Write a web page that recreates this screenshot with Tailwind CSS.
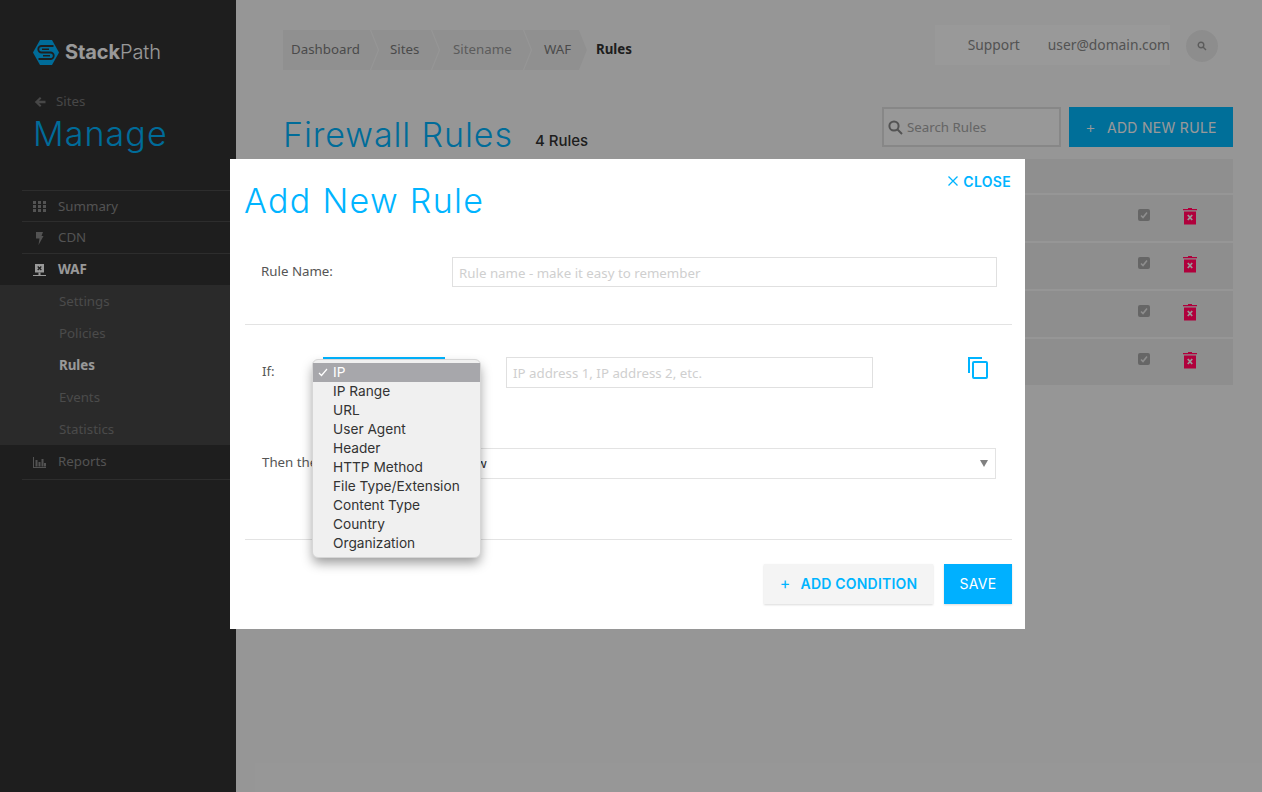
<!DOCTYPE html>
<html lang="en">
<head>
  <meta charset="UTF-8">
  <title>Firewall Rules</title>
  <script src="https://cdn.jsdelivr.net/npm/@tailwindcss/browser@4"></script>
</head>
<body class="bg-[#fbfbfb] font-['Noto_Sans',sans-serif] text-[13.3px]">
  <div class="relative flex h-[792px] w-[1262px] overflow-hidden">

    <!-- Sidebar -->
    <aside class="w-[236px] shrink-0 bg-[#333333] text-[#8a8a8a]">
      <div class="flex items-center gap-[6px] pl-[33px] pt-[39px]">
        <svg width="26" height="25" viewBox="0 0 26 25">
          <path d="M7 0H19L26 12.5L19 25H7L0 12.5Z" fill="#00b4ff"/>
          <path d="M20.5 6H8.5a3.25 3.25 0 0 0 0 6.5h9a3.25 3.25 0 0 1 0 6.5H5.5" fill="none" stroke="#333333" stroke-width="1.8"/>
          <path d="M16 9.25H9M10 15.75H17" fill="none" stroke="#333333" stroke-width="1.4"/>
        </svg>
        <div class="font-['Inter',sans-serif] text-[20px] leading-[26px] tracking-[-0.1px] text-white"><span class="font-bold">Stack</span><span class="font-light">Path</span></div>
      </div>
      <div class="mt-[27px] flex h-[20px] items-center gap-[10px] pl-[34px] text-[#777777]">
        <svg width="12" height="12" viewBox="0 0 12 12" fill="#777777"><path d="M6 1L7.4 2.4L5 4.8H11.5V7.2H5L7.4 9.6L6 11L0.8 6Z"/></svg>
        <span>Sites</span>
      </div>
      <h2 class="mt-[1px] pl-[33px] font-['Inter',sans-serif] text-[34px] leading-[42px] font-light tracking-[1.1px] text-[#00b4ff]">Manage</h2>

      <nav class="mt-[35px]">
        <a class="ml-[22px] flex h-[31px] items-center gap-[12px] border-t border-[#4b4b4b] pl-[11px] pt-[1px]">
          <svg width="13" height="11" viewBox="0 0 13 11" fill="#8a8a8a"><path d="M0 0h3v3H0zM5 0h3v3H5zM10 0h3v3h-3zM0 4h3v3H0zM5 4h3v3H5zM10 4h3v3h-3zM0 8h3v3H0zM5 8h3v3H5zM10 8h3v3h-3z"/></svg>
          <span>Summary</span>
        </a>
        <a class="ml-[22px] flex h-[32px] items-center gap-[12px] border-t border-[#4b4b4b] pl-[11px] pt-[1px]">
          <svg width="13" height="13" viewBox="0 0 13 13" fill="#8a8a8a"><path d="M3 0H10L8.5 4H10.5L5.5 13L6.5 6.5H3Z"/></svg>
          <span>CDN</span>
        </a>
        <a class="ml-[22px] flex h-[32px] items-center gap-[12px] border-t border-[#4b4b4b] pl-[11px] pt-[1px] font-bold text-white">
          <svg width="13" height="13" viewBox="0 0 13 13"><path d="M2 0H11V8.5H2Z" fill="#ffffff"/><path d="M4.7 2.5L8.3 6M8.3 2.5L4.7 6" stroke="#333333" stroke-width="1.3"/><path d="M0 11H13V12H0ZM5.5 8.5H7.5V11H5.5Z" fill="#ffffff"/></svg>
          <span>WAF</span>
        </a>
        <div class="bg-[#474747] text-[#7d7d7d]">
          <a class="flex h-[32px] items-center pl-[59px] pt-[2px]">Settings</a>
          <a class="flex h-[32px] items-center pl-[59px] pt-[2px]">Policies</a>
          <a class="flex h-[32px] items-center pl-[59px] pt-[2px] font-bold text-white">Rules</a>
          <a class="flex h-[32px] items-center pl-[59px] pt-[2px]">Events</a>
          <a class="flex h-[32px] items-center pl-[59px] pt-[2px]">Statistics</a>
        </div>
        <a class="ml-[22px] flex h-[35px] items-center gap-[12px] border-b border-[#4b4b4b] pl-[11px]">
          <svg width="13" height="11" viewBox="0 0 13 11" fill="#8a8a8a"><path d="M0 0h1v10h12v1H0zM2.5 3h2v6.5h-2zM5.5 5h2v4.5h-2zM8.5 2h2v7.5h-2zM11 6h2v3.5h-2z"/></svg>
          <span>Reports</span>
        </a>
      </nav>
    </aside>

    <!-- Page -->
    <main class="flex-1 pl-[47px] pr-[29px] pt-[25px]">
      <div class="flex h-[40px] justify-between">
        <div class="mt-[5px] flex h-[40px] items-center text-[#7c7c7c]">
          <a class="flex h-full w-[95px] items-center bg-[#f1f1f1] pl-[8px] [clip-path:polygon(0_0,calc(100%-8px)_0,100%_50%,calc(100%-8px)_100%,0_100%)]">Dashboard</a>
          <a class="-ml-[7px] flex h-full w-[68px] items-center bg-[#f1f1f1] pl-[19px] [clip-path:polygon(0_0,calc(100%-8px)_0,100%_50%,calc(100%-8px)_100%,0_100%,8px_50%)]">Sites</a>
          <a class="-ml-[7px] flex h-full w-[99px] items-center bg-[#f1f1f1] pl-[21px] text-[#999999] [clip-path:polygon(0_0,calc(100%-8px)_0,100%_50%,calc(100%-8px)_100%,0_100%,8px_50%)]">Sitename</a>
          <a class="-ml-[7px] flex h-full w-[63px] items-center bg-[#f1f1f1] pl-[20px] [clip-path:polygon(0_0,calc(100%-8px)_0,100%_50%,calc(100%-8px)_100%,0_100%,8px_50%)]">WAF</a>
          <span class="ml-[9px] font-bold text-[#333333]">Rules</span>
        </div>
        <div class="mr-[15px] flex">
          <div class="flex h-[40px] w-[235px] items-center justify-end gap-[28px] bg-white text-[13.8px] text-[#8a8a8a]">
            <a>Support</a>
            <a>user@domain.com</a>
          </div>
          <div class="ml-[16px] mt-[5px] flex size-[32px] items-center justify-center rounded-full bg-[#ececec]">
            <svg width="10" height="10" viewBox="0 0 10 10" fill="none" stroke="#999999" stroke-width="1.4"><circle cx="4" cy="4" r="2.8"/><path d="M6 6L9 9"/></svg>
          </div>
        </div>
      </div>

      <div class="mt-[42px] flex h-[40px] items-center">
        <h1 class="mt-[14px] font-['Inter',sans-serif] text-[34px] font-light tracking-[0.9px] text-[#00b4ff]">Firewall Rules</h1>
        <span class="ml-[22px] mt-[29px] font-['Inter',sans-serif] text-[15px] font-medium text-[#333333]">4 Rules</span>
        <div class="ml-auto flex h-[40px] w-[179px] items-center gap-[4px] border-2 border-[#e2e2e2] bg-[#fdfdfd] pl-[4px] text-[#a8a8a8]">
          <svg width="15" height="15" viewBox="0 0 15 15" fill="none" stroke="#8a8a8a" stroke-width="2"><circle cx="6" cy="6" r="4.6"/><path d="M9.5 9.5L14 14"/></svg>
          <span class="pt-[2px]">Search Rules</span>
        </div>
        <button class="ml-[8px] flex h-[40px] w-[164px] items-center justify-center gap-[11px] bg-[#00b9ff] font-['Inter',sans-serif] text-[14px] font-normal tracking-[0.3px] text-white"><span class="text-[16px] font-light">+</span><span>ADD NEW RULE</span></button>
      </div>

      <div class="mt-[12px]">
        <div class="h-[34px] bg-[#efefef]"></div>
        <div class="mt-[2px] flex h-[46px] items-center justify-end gap-[33px] bg-[#ededed] pr-[36px]">
          <span class="-mt-[6px] flex size-[12px] items-center justify-center rounded-[2px] bg-[#aaaaaa]"><svg width="10" height="10" viewBox="0 0 10 10" fill="none" stroke="#ededed" stroke-width="1.6"><path d="M2 5.5L4 7.5L8 2.5"/></svg></span>
          <svg class="relative z-30 -mt-[4px]" width="14" height="18" viewBox="0 0 14 18"><path d="M0 2H5V1H9V2H14V3.2H0ZM1 4.5H13V17.5H1Z" fill="#b0003c"/><path d="M4.8 8L9.2 13M9.2 8L4.8 13" stroke="#999999" stroke-width="1.8"/></svg>
        </div>
        <div class="mt-[2px] flex h-[46px] items-center justify-end gap-[33px] bg-[#ededed] pr-[36px]">
          <span class="-mt-[6px] flex size-[12px] items-center justify-center rounded-[2px] bg-[#aaaaaa]"><svg width="10" height="10" viewBox="0 0 10 10" fill="none" stroke="#ededed" stroke-width="1.6"><path d="M2 5.5L4 7.5L8 2.5"/></svg></span>
          <svg class="relative z-30 -mt-[4px]" width="14" height="18" viewBox="0 0 14 18"><path d="M0 2H5V1H9V2H14V3.2H0ZM1 4.5H13V17.5H1Z" fill="#b0003c"/><path d="M4.8 8L9.2 13M9.2 8L4.8 13" stroke="#999999" stroke-width="1.8"/></svg>
        </div>
        <div class="mt-[2px] flex h-[46px] items-center justify-end gap-[33px] bg-[#ededed] pr-[36px]">
          <span class="-mt-[6px] flex size-[12px] items-center justify-center rounded-[2px] bg-[#aaaaaa]"><svg width="10" height="10" viewBox="0 0 10 10" fill="none" stroke="#ededed" stroke-width="1.6"><path d="M2 5.5L4 7.5L8 2.5"/></svg></span>
          <svg class="relative z-30 -mt-[4px]" width="14" height="18" viewBox="0 0 14 18"><path d="M0 2H5V1H9V2H14V3.2H0ZM1 4.5H13V17.5H1Z" fill="#b0003c"/><path d="M4.8 8L9.2 13M9.2 8L4.8 13" stroke="#999999" stroke-width="1.8"/></svg>
        </div>
        <div class="mt-[2px] flex h-[46px] items-center justify-end gap-[33px] bg-[#ededed] pr-[36px]">
          <span class="-mt-[6px] flex size-[12px] items-center justify-center rounded-[2px] bg-[#aaaaaa]"><svg width="10" height="10" viewBox="0 0 10 10" fill="none" stroke="#ededed" stroke-width="1.6"><path d="M2 5.5L4 7.5L8 2.5"/></svg></span>
          <svg class="relative z-30 -mt-[4px]" width="14" height="18" viewBox="0 0 14 18"><path d="M0 2H5V1H9V2H14V3.2H0ZM1 4.5H13V17.5H1Z" fill="#b0003c"/><path d="M4.8 8L9.2 13M9.2 8L4.8 13" stroke="#999999" stroke-width="1.8"/></svg>
        </div>
      </div>
    </main>

    <!-- Overlay -->
    <div class="absolute inset-0 z-20 bg-black/40"></div>

    <!-- Modal -->
    <div class="absolute left-[230px] top-[159px] z-30 h-[470px] w-[795px] bg-white pl-[15px] pr-[13px]">
      <div class="flex justify-between pt-[15px]">
        <h2 class="-ml-[1px] mt-[7px] font-['Inter',sans-serif] text-[34px] leading-[40px] font-light tracking-[1.3px] text-[#00b4ff]">Add New Rule</h2>
        <button class="mr-[1px] flex h-[14px] items-center gap-[5px] font-['Inter',sans-serif] text-[14px] font-semibold tracking-[0.3px] text-[#00b4ff]">
          <svg width="10" height="10" viewBox="0 0 10 10" stroke="#00b4ff" stroke-width="1.3"><path d="M0.5 0.5L9.5 9.5M9.5 0.5L0.5 9.5"/></svg>
          <span>CLOSE</span>
        </button>
      </div>

      <div class="mt-[36px] flex h-[30px] items-center">
        <label class="w-[207px] pl-[16px] text-[#555555]">Rule Name:</label>
        <input class="h-[30px] w-[545px] border border-[#e0e0e0] px-[6px] pt-[2px] outline-none placeholder:text-[#cfcfcf]" placeholder="Rule name - make it easy to remember">
      </div>
      <div class="mt-[37px] h-px bg-[#e3e3e3]"></div>

      <div class="mt-[32px] flex h-[31px] items-start">
        <label class="flex h-[31px] w-[78px] items-center pb-[2px] pl-[17px] text-[#555555]">If:</label>
        <div class="h-[31px] w-[122px] border-2 border-[#00b4ff]"></div>
        <input class="ml-[61px] h-[31px] w-[367px] border border-[#e0e0e0] px-[6px] outline-none placeholder:text-[#cfcfcf]" placeholder="IP address 1, IP address 2, etc.">
        <svg class="ml-[95px]" width="20" height="22" viewBox="0 0 20 22" fill="none" stroke="#00b4ff" stroke-width="2"><path d="M1 16V1H14"/><rect x="5" y="5" width="14" height="16" rx="1"/></svg>
      </div>

      <div class="mt-[60px] flex h-[31px] items-center">
        <label class="w-[207px] pb-[2px] pl-[17px] text-[#555555]">Then the</label>
        <div class="flex h-[31px] w-[544px] items-center justify-between border border-[#e3e3e3] pr-[7px] text-[#333333]">
          <span>Allow</span>
          <svg width="8" height="7" viewBox="0 0 8 7" fill="#808080"><path d="M0 0H8L4 7Z"/></svg>
        </div>
      </div>
      <div class="mt-[60px] h-px bg-[#e3e3e3]"></div>

      <div class="mt-[24px] flex justify-end gap-[11px]">
        <button class="flex h-[40px] w-[169px] items-center justify-center gap-[10px] bg-[#f4f4f4] pb-[2px] font-['Inter',sans-serif] text-[14px] font-semibold tracking-[0.2px] text-[#00b4ff] shadow-[0_1px_2px_rgba(0,0,0,0.15)]"><span class="text-[16px] font-normal">+</span><span>ADD CONDITION</span></button>
        <button class="h-[40px] w-[68px] bg-[#00b0ff] pb-[2px] font-['Inter',sans-serif] text-[14px] tracking-[0.3px] text-white shadow-[0_1px_2px_rgba(0,0,0,0.15)]">SAVE</button>
      </div>
    </div>

    <!-- Native select menu -->
    <ul class="absolute left-[312px] top-[359px] z-40 h-[199px] w-[169px] rounded-[6px] border border-[#d6d6d6] bg-[#f0f0f0] pb-[4px] pt-[3px] font-['Inter',sans-serif] text-[13.7px] leading-[18px] text-[#333333] shadow-[0_6px_12px_-1px_rgba(0,0,0,0.4)]">
      <li class="relative h-[19px] bg-[#a7a7ab] pl-[20px] text-white">
        <svg class="absolute left-[5px] top-[5px]" width="10" height="9" viewBox="0 0 10 9" fill="none" stroke="#ffffff" stroke-width="1.2"><path d="M1 5L3.5 7.5L9 1"/></svg>
        IP
      </li>
      <li class="h-[19px] pl-[20px]">IP Range</li>
      <li class="h-[19px] pl-[20px]">URL</li>
      <li class="h-[19px] pl-[20px]">User Agent</li>
      <li class="h-[19px] pl-[20px]">Header</li>
      <li class="h-[19px] pl-[20px]">HTTP Method</li>
      <li class="h-[19px] pl-[20px]">File Type/Extension</li>
      <li class="h-[19px] pl-[20px]">Content Type</li>
      <li class="h-[19px] pl-[20px]">Country</li>
      <li class="h-[19px] pl-[20px]">Organization</li>
    </ul>
  </div>
</body>
</html>
